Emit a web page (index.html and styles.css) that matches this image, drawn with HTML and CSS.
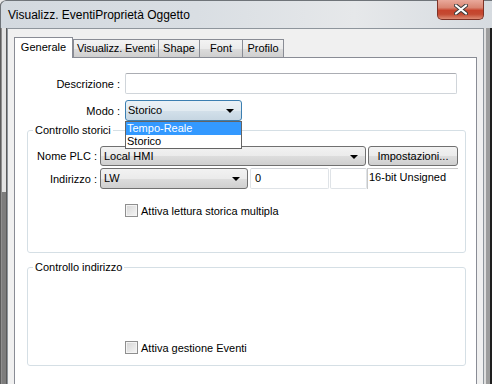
FILE: index.html
```html
<!DOCTYPE html>
<html lang="it">
<head>
    <meta charset="UTF-8">
    <title>Visualizz. Eventi</title>
    <link rel="stylesheet" href="styles.css">
</head>
<body>
    <div class="window">
        <!-- barra del titolo -->
        <div class="titlebar">
            <span class="title">Visualizz. EventiProprietà Oggetto</span>
            <div class="close">
                <svg width="14" height="11" viewBox="0 0 14 11">
                    <path d="M2 1.5 L12 9.5 M12 1.5 L2 9.5" stroke="#3b3b3b" stroke-width="4" stroke-linecap="round"/>
                    <path d="M2 1.5 L12 9.5 M12 1.5 L2 9.5" stroke="#fff" stroke-width="2.2" stroke-linecap="round"/>
                </svg>
            </div>
        </div>

        <div class="client">
            <!-- schede -->
            <div class="tabs">
                <div class="tab active">Generale</div>
                <div class="tab tab-eventi">Visualizz. Eventi</div>
                <div class="tab tab-shape">Shape</div>
                <div class="tab tab-font">Font</div>
                <div class="tab tab-profilo">Profilo</div>
            </div>

            <div class="page">
                <div class="row row-desc">
                    <label class="lbl">Descrizione :</label>
                    <div class="input input-desc"></div>
                </div>

                <div class="row row-modo">
                    <label class="lbl">Modo :</label>
                    <div class="combo combo-focus combo-modo">Storico<span class="arrow"></span></div>
                    <ul class="dropdown">
                        <li class="selected">Tempo-Reale</li>
                        <li>Storico</li>
                    </ul>
                </div>

                <fieldset class="group group-storici">
                    <legend>Controllo storici</legend>
                    <div class="row row-plc">
                        <label class="lbl lbl-small">Nome PLC :</label>
                        <div class="combo combo-plc">Local HMI<span class="arrow"></span></div>
                        <div class="btn">Impostazioni...</div>
                    </div>
                    <div class="row row-addr">
                        <label class="lbl lbl-small">Indirizzo :</label>
                        <div class="combo combo-lw">LW<span class="arrow"></span></div>
                        <div class="input input-zero">0</div>
                        <div class="input input-empty"></div>
                        <div class="static">16-bit Unsigned</div>
                    </div>
                    <div class="check check-multi">
                        <span class="box"></span>Attiva lettura storica multipla
                    </div>
                </fieldset>

                <fieldset class="group group-indirizzo">
                    <legend>Controllo indirizzo</legend>
                    <div class="check check-eventi">
                        <span class="box"></span>Attiva gestione Eventi
                    </div>
                </fieldset>
            </div>
        </div>
    </div>
</body>
</html>
```

FILE: styles.css
```css
* {
    box-sizing: border-box;
}

body {
    margin: 0;
    background: #e9e9e9;
    font-family: 'Liberation Sans', Arial, sans-serif;
    font-size: 11px;
    color: #000;
}

/* finestra */
.window {
    width: 492px;
    height: 384px;
    overflow: hidden;
    display: flex;
    flex-direction: column;
    border-radius: 6px 0 0 0;
    background:
        linear-gradient(to bottom, #e3e3e3 0, #e3e3e3 192px, #7d7d7d 192px) 2px 0 / 4px 100% no-repeat,
        linear-gradient(to right, #5c5c5c 0, #5c5c5c 1px, #8f8f8f 1px, #8f8f8f 2px, #e3e3e3 2px, #e3e3e3 6px, #5a5a5a 6px, #5a5a5a 7px,
            #f0f0f0 7px, #f0f0f0 484px, #dedede 484px, #dedede 486px, #9d9d9d 486px, #9d9d9d 490px, #1e1e1e 490px);
}

.titlebar {
    height: 28px;
    flex: none;
    display: flex;
    align-items: flex-start;
    padding-left: 8px;
    border-radius: 6px 0 0 0;
    border-top: 1px solid #6f7479;
    border-left: 1px solid #6f7479;
    background: linear-gradient(to right, #d3d9df 0%, #d9dee3 40%, #e6e8ea 72%, #d6dbe0 100%);
}

.title {
    font-size: 12px;
    line-height: 15px;
    margin-top: 7px;
    margin-left: -1px;
}

.close {
    margin-left: auto;
    margin-right: 8px;
    margin-top: -1px;
    width: 47px;
    height: 20px;
    display: flex;
    align-items: center;
    justify-content: center;
    border: 1px solid #7e3226;
    border-top: none;
    border-radius: 0 0 5px 5px;
    background: linear-gradient(to bottom, #e9a99b 0%, #d98572 40%, #c6432c 55%, #c44a32 75%, #dd8a73 100%);
}

.client {
    flex: 1;
    margin: 0 8px 0 7px;
    background: #f0f0f0;
    border: 1px solid #8e959c;
    border-bottom: none;
    padding: 8px 6px 0 6px;
    display: flex;
    flex-direction: column;
}

/* schede */
.tabs {
    display: flex;
    align-items: flex-end;
    height: 20px;
    flex: none;
}

.tab {
    height: 18px;
    line-height: 16px;
    text-align: center;
    white-space: nowrap;
    border: 1px solid #898c95;
    border-left: none;
    border-bottom: none;
    background: linear-gradient(to bottom, #f3f3f3 0%, #ebebeb 50%, #dddddd 51%, #cfcfcf 100%);
}

.tab.active {
    width: 59px;
    height: 21px;
    line-height: 19px;
    border-left: 1px solid #898c95;
    background: #fff;
    margin-bottom: -1px;
    position: relative;
    z-index: 1;
}

.tab-eventi {
    width: 86px;
    border-left: 1px solid #898c95;
    letter-spacing: -0.1px;
}

.tab-shape {
    width: 41px;
}

.tab-font {
    width: 43px;
}

.tab-profilo {
    width: 41px;
}

.page {
    flex: 1;
    background: #fff;
    border: 1px solid #898c95;
    border-bottom: none;
}

/* righe del modulo */
.row {
    display: flex;
    align-items: center;
}

.lbl {
    width: 105px;
    margin-right: 5px;
    text-align: right;
    white-space: nowrap;
}

.lbl-small {
    width: 69px;
    margin-right: 3px;
}

.row-desc {
    margin-top: 15px;
}

.row-modo {
    margin-top: 6px;
    position: relative;
}

.input {
    height: 21px;
    border: 1px solid #d0d5da;
    border-top-color: #abadb3;
    border-radius: 2px;
    background: #fff;
    padding-left: 3px;
    line-height: 19px;
}

.input-desc {
    width: 332px;
}

.combo {
    position: relative;
    height: 20px;
    line-height: 18px;
    padding-left: 3px;
    border: 1px solid #707070;
    border-radius: 3px;
    background: linear-gradient(to bottom, #f2f2f2 0%, #ebebeb 50%, #dddddd 51%, #cfcfcf 100%);
    white-space: nowrap;
}

.combo-focus {
    border-color: #3c7fb1;
    background: linear-gradient(to bottom, #eaf1f6 0%, #e2ebf1 50%, #d3e0ea 51%, #c6d6e2 100%);
}

.arrow {
    position: absolute;
    right: 7px;
    top: 8px;
    border-left: 4px solid transparent;
    border-right: 4px solid transparent;
    border-top: 4px solid #000;
}

.combo-modo {
    width: 117px;
    height: 21px;
    line-height: 19px;
    padding-left: 2px;
}

.dropdown {
    position: absolute;
    left: 110px;
    top: 21px;
    width: 117px;
    margin: 0;
    padding: 0;
    list-style: none;
    background: #fff;
    border: 1px solid #646464;
    z-index: 5;
}

.dropdown li {
    height: 13px;
    line-height: 13px;
    padding-left: 1px;
}

.dropdown li.selected {
    background: #3399ff;
    color: #fff;
}

/* gruppi */
.group {
    margin: 3px 0 0 12px;
    padding: 0;
    width: 439px;
    border: 1px solid #d5dfe5;
    border-radius: 3px;
}

.group legend {
    margin-left: 5px;
    padding: 0 2px;
    line-height: 13px;
}

.group-storici {
    height: 129px;
}

.group-indirizzo {
    margin-top: 8px;
    height: 105px;
}

.row-plc {
    margin-top: 9px;
}

.combo-plc {
    width: 266px;
}

.btn {
    width: 90px;
    height: 20px;
    margin-left: 2px;
    line-height: 18px;
    text-align: center;
    border: 1px solid #707070;
    border-radius: 3px;
    background: linear-gradient(to bottom, #f2f2f2 0%, #ebebeb 50%, #dddddd 51%, #cfcfcf 100%);
}

.row-addr {
    margin-top: 2px;
}

.combo-lw {
    width: 148px;
    height: 21px;
    line-height: 19px;
}

.input-zero {
    width: 79px;
    margin-left: 2px;
    border-color: #dfe3e7;
    border-top-color: #d0d3d7;
    padding-left: 4px;
}

.input-empty {
    width: 37px;
    margin-left: 1px;
    border-color: #dfe3e7;
    border-top-color: #d0d3d7;
}

.static {
    width: 91px;
    height: 21px;
    line-height: 16px;
    padding-left: 1px;
    border-left: 1px solid #c8c8c8;
    border-top: 1px solid #c8c8c8;
    white-space: nowrap;
    align-self: flex-start;
}

/* caselle di controllo */
.check {
    display: flex;
    align-items: center;
    margin-left: 97px;
    height: 13px;
    white-space: nowrap;
}

.box {
    width: 13px;
    height: 13px;
    margin-right: 3px;
    border: 1px solid #8f8f8f;
    background: linear-gradient(to bottom right, #d5d5d5, #f6f6f6);
    box-shadow: inset 0 0 0 1px #f4f4f4;
}

.check-multi {
    margin-top: 15px;
}

.check-eventi {
    margin-top: 67px;
}
```
